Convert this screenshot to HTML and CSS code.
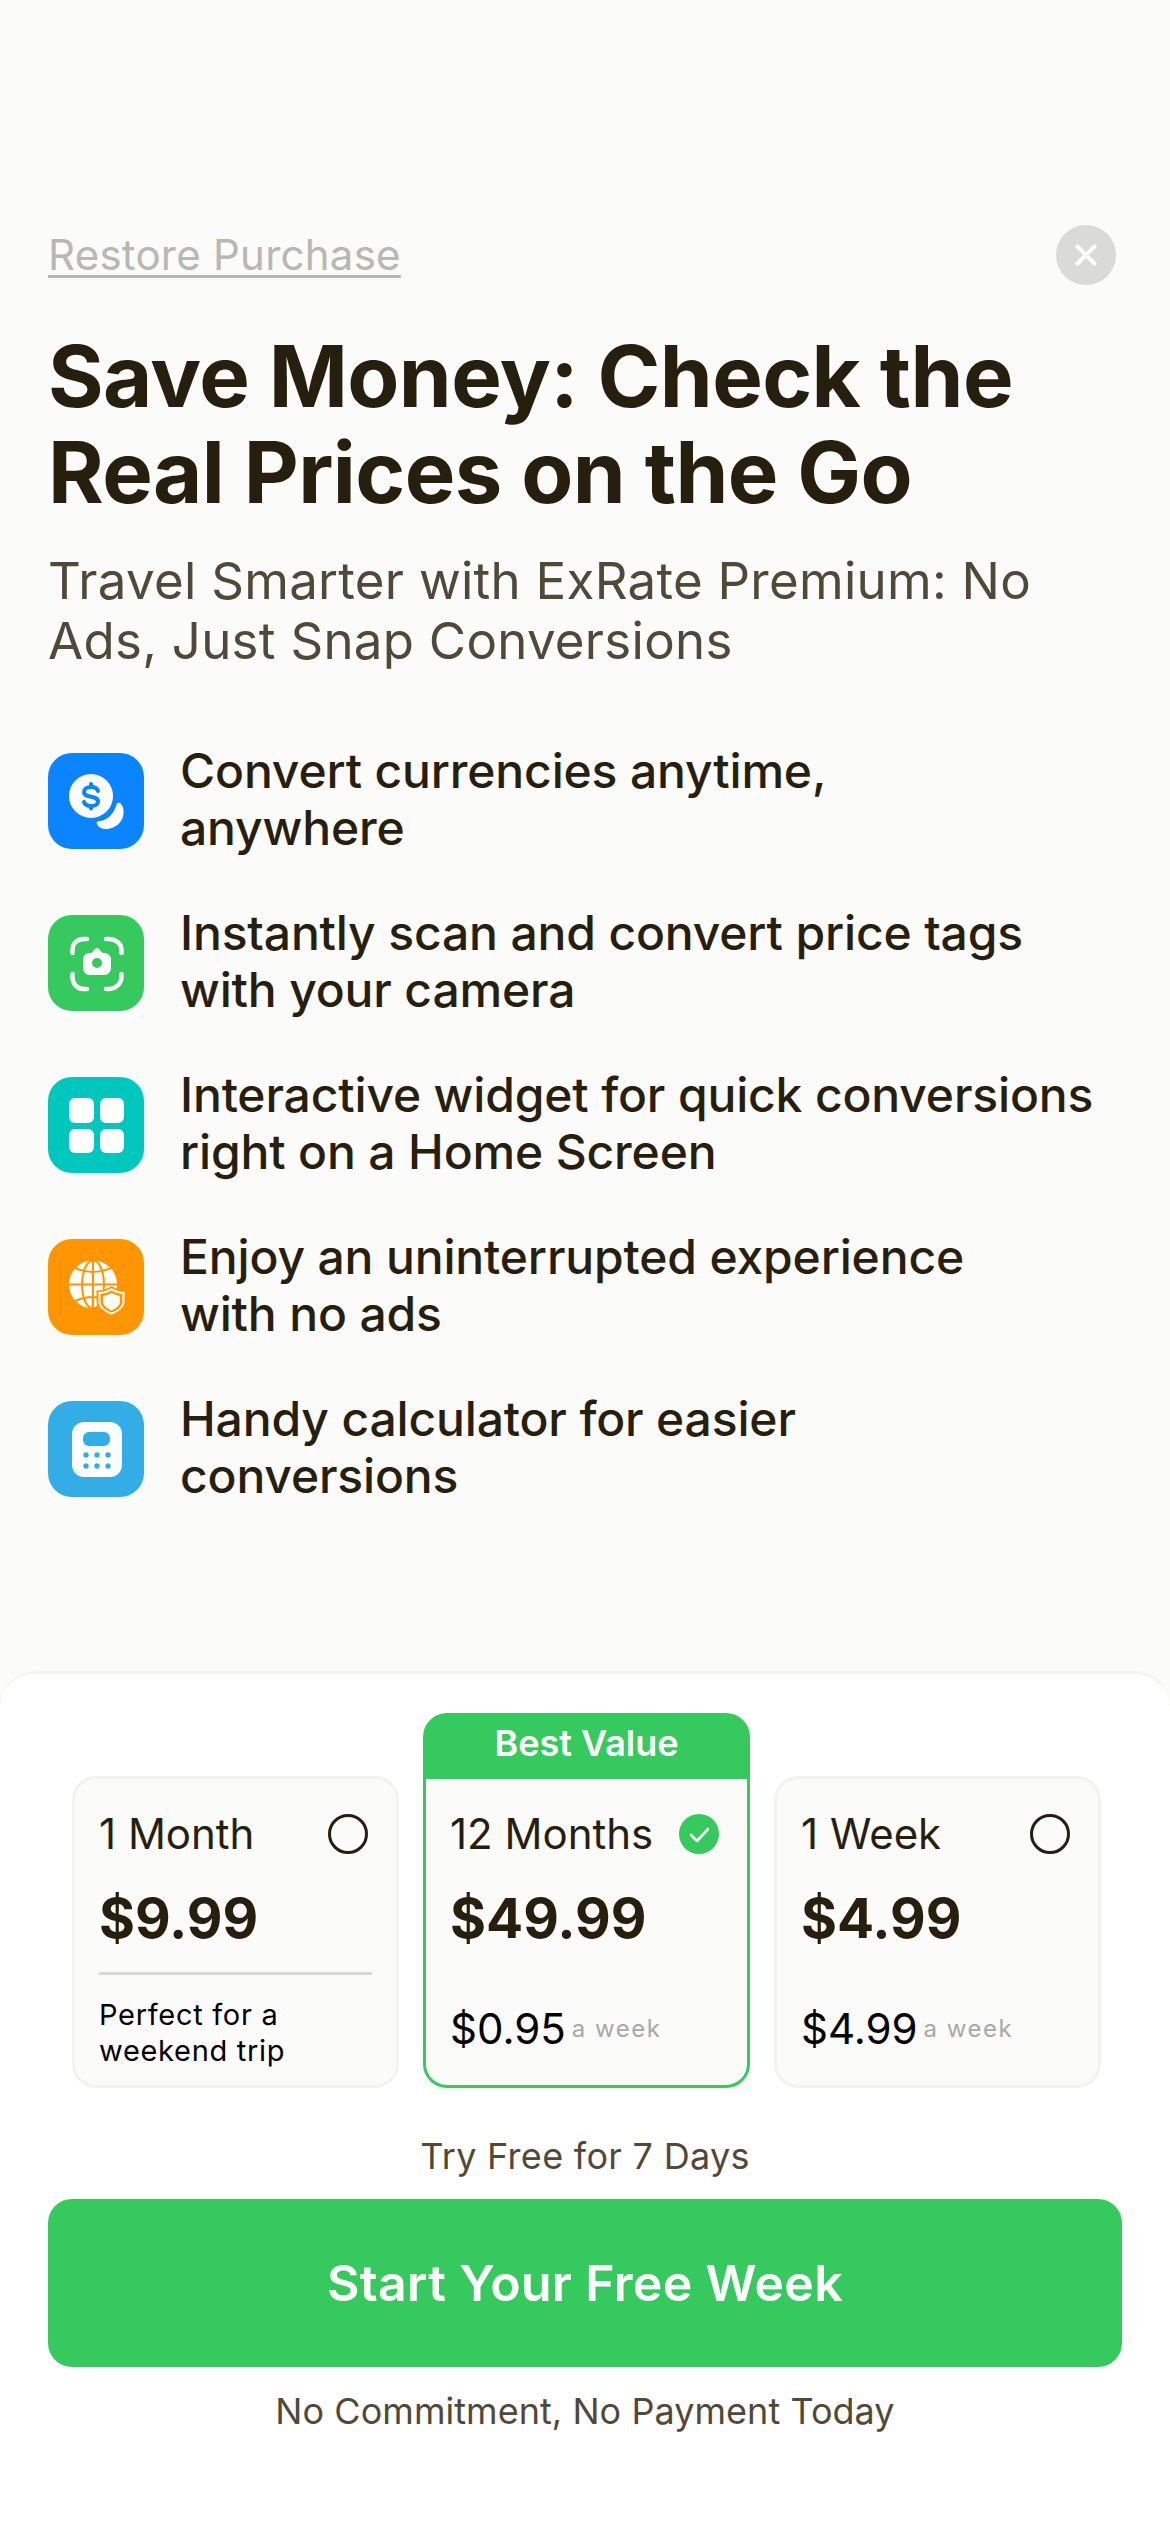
FILE: index.html
```html
<!DOCTYPE html>
<html lang="en">
<head>
<meta charset="utf-8">
<title>ExRate Premium</title>
<link rel="stylesheet" href="styles.css">
</head>
<body>
<main class="screen">
  <section class="top">
    <div class="topbar">
      <a class="restore">Restore Purchase</a>
      <span class="close"><svg width="30" height="30" viewBox="0 0 30 30"><path d="M6.500 6.500L23.500 23.500M23.500 6.500L6.500 23.500" stroke="#fff" stroke-width="4" stroke-linecap="round"/></svg></span>
    </div>
    <h1 class="title">Save Money: Check the<br>Real Prices on the Go</h1>
    <p class="subtitle">Travel Smarter with ExRate Premium: No<br>Ads, Just Snap Conversions</p>
    <ul class="features">
      <li class="feature">
        <span class="ficon blue"><svg width="96" height="96" viewBox="0 0 96 96"><circle cx="43" cy="43" r="22" fill="#fff"/><path d="M50 38c-1-3-4-4-7-4-4 0-7 2-7 5 0 7 14 2.500 14 9.500 0 3-3 4.500-7 4.500-3 0-6-1-7-4M43 31v3M43 53v2.500" fill="none" stroke="#0a84ff" stroke-width="4" stroke-linecap="round"/><path d="M69 50c3-1 5 1 6 5 3 11-6 21-17 21-4 0-8-2-9-5-1-2 0-3 3-3 8-1 14-7 17-18z" fill="#fff"/></svg></span>
        <span class="ftext">Convert currencies anytime,<br>anywhere</span>
      </li>
      <li class="feature">
        <span class="ficon green"><svg width="96" height="96" viewBox="0 0 96 96"><path d="M24.500 38v-3c0-6 4-11 11-11h3.500M58 24h3c7 0 12.500 5 12.500 11v3M24.500 59v3c0 6 4 12 11 12h3.500M58 74h3c7 0 12.500-6 12.500-12v-3" fill="none" stroke="#fff" stroke-width="4.400" stroke-linecap="round"/><path d="M42 38c2 0 3-1 4-3 1-1 2-2 3-2s2 1 3 2c1 2 2 3 4 3 4 0 7 3 7 6v9c0 4-3 7-7 7H42c-4 0-7-3-7-7v-9c0-3 3-6 7-6z" fill="#fff"/><circle cx="49" cy="48" r="5" fill="#36c95d"/></svg></span>
        <span class="ftext">Instantly scan and convert price tags<br>with your camera</span>
      </li>
      <li class="feature">
        <span class="ficon teal"><svg width="96" height="96" viewBox="0 0 96 96"><rect x="21" y="21" width="25" height="25" rx="6" fill="#fff"/><rect x="52" y="21" width="24" height="25" rx="6" fill="#fff"/><rect x="21" y="52" width="25" height="24" rx="6" fill="#fff"/><rect x="52" y="52" width="24" height="24" rx="6" fill="#fff"/></svg></span>
        <span class="ftext">Interactive widget for quick conversions<br>right on a Home Screen</span>
      </li>
      <li class="feature">
        <span class="ficon orange"><svg width="96" height="96" viewBox="0 0 96 96"><circle cx="45" cy="45.500" r="24" fill="#fff"/><g fill="none" stroke="#ff9500" stroke-width="2"><ellipse cx="45" cy="45.500" rx="11" ry="24"/><path d="M45 21v49M21 45.500h48M27 29Q45 37 63 29M27 62Q45 54 63 62"/></g><path d="M63.500 47q7 4.500 15 4.500v11c0 7-7 12-15 15-8-3-15-8-15-15v-11q8 0 15-4.500z" fill="#ff9500"/><path d="M63.500 49q6 4 13 4v9.500c0 6-6 10.500-13 13-7-2.500-13-7-13-13V53q7 0 13-4z" fill="#fff"/><path d="M63.500 51.500q5 3 11 3.500v7.500c0 5-5 9-11 11-6-2-11-6-11-11V55q6-.5 11-3.500z" fill="#ff9500"/><path d="M63.500 54q4 2.500 8.500 3v5.500c0 4-4 7-8.500 9-4.500-2-8.500-5-8.500-9V57q4.500-.5 8.500-3z" fill="#fff"/></svg></span>
        <span class="ftext">Enjoy an uninterrupted experience<br>with no ads</span>
      </li>
      <li class="feature">
        <span class="ficon sky"><svg width="96" height="96" viewBox="0 0 96 96"><rect x="24" y="21" width="50" height="55" rx="12" fill="#fff"/><rect x="35" y="31" width="27" height="14" rx="6" fill="#32ade6"/><g fill="#32ade6"><circle cx="38" cy="54" r="2.700"/><circle cx="49" cy="54" r="2.700"/><circle cx="60" cy="54" r="2.700"/><circle cx="38" cy="65" r="2.700"/><circle cx="49" cy="65" r="2.700"/><circle cx="60" cy="65" r="2.700"/></g></svg></span>
        <span class="ftext">Handy calculator for easier<br>conversions</span>
      </li>
    </ul>
  </section>
  <section class="sheet">
    <div class="plans">
      <div class="plan">
        <div class="plan-head"><span class="plan-name">1 Month</span><span class="radio"></span></div>
        <div class="plan-price">$9.99</div>
        <div class="plan-foot note">Perfect for a<br>weekend trip</div>
      </div>
      <div class="plan selected">
        <div class="badge">Best Value</div>
        <div class="plan-head"><span class="plan-name">12 Months</span><span class="check"><svg width="40" height="40" viewBox="0 0 40 40"><circle cx="20" cy="20" r="20" fill="#36c95d"/><path d="M12 21l6 6 11-12" fill="none" stroke="#fff" stroke-width="2.600" stroke-linecap="round" stroke-linejoin="round"/></svg></span></div>
        <div class="plan-price">$49.99</div>
        <div class="plan-foot rate"><span class="rate-value">$0.95</span><span class="rate-unit">a week</span></div>
      </div>
      <div class="plan">
        <div class="plan-head"><span class="plan-name">1 Week</span><span class="radio"></span></div>
        <div class="plan-price">$4.99</div>
        <div class="plan-foot rate"><span class="rate-value">$4.99</span><span class="rate-unit">a week</span></div>
      </div>
    </div>
    <p class="trial">Try Free for 7 Days</p>
    <button class="cta">Start Your Free Week</button>
    <p class="fine">No Commitment, No Payment Today</p>
  </section>
</main>
</body>
</html>
```
FILE: styles.css
```css
* { box-sizing: border-box; }
html, body { margin: 0; padding: 0; }
body { font-family: Inter, "Liberation Sans", sans-serif; background: #fbfbf9; color: #271f0e; }
.screen { width: 1170px; height: 2532px; display: flex; flex-direction: column; overflow: hidden; }
.top { flex: 1; padding: 225px 48px 0; }
.topbar { display: flex; justify-content: space-between; align-items: center; height: 60px; padding-right: 6px; }
.restore { font-size: 42px; line-height: 60px; color: #b8b7b0; text-decoration: underline; text-decoration-thickness: 3px; text-underline-offset: 5px; letter-spacing: 0.25px; }
.close { width: 60px; height: 60px; border-radius: 50%; background: #dadad7; display: flex; align-items: center; justify-content: center; }
.title { margin: 44px 0 0; font-size: 85px; line-height: 96px; font-weight: 700; letter-spacing: -0.6px; }
.subtitle { margin: 30px 0 0; font-size: 51px; line-height: 60px; color: #4f4938; letter-spacing: 0.28px; }
.features { list-style: none; margin: 73px 0 0; padding: 0; display: flex; flex-direction: column; gap: 48px; }
.feature { display: flex; align-items: center; gap: 36px; height: 114px; }
.ficon { width: 96px; height: 96px; border-radius: 24px; flex: none; display: block; }
.ficon svg { display: block; }
.blue { background: #0a84ff; }
.green { background: #36c95d; }
.teal { background: #00c7be; }
.orange { background: #ff9500; }
.sky { background: #32ade6; }
.ftext { font-size: 48px; line-height: 57px; font-weight: 500; letter-spacing: -0.15px; white-space: nowrap; padding-bottom: 4px; }
.sheet { height: 861px; flex: none; background: #fff; border-top: 3px solid #f3f3f2; border-radius: 36px 36px 0 0; padding: 40px 48px 0; display: flex; flex-direction: column; align-items: stretch; }
.plans { display: flex; gap: 24px; height: 374px; flex: none; align-items: flex-end; padding: 0 21px 0 24px; }
.plan { position: relative; flex: 1; height: 312px; border: 3px solid #f3f3f2; border-radius: 24px; background: #fbfbf9; padding: 32px 24px 0; display: flex; flex-direction: column; }
.selected { border-color: #36c95d; border-radius: 0 0 24px 24px; }
.badge { position: absolute; left: -3px; right: -3px; top: -66px; height: 66px; background: #36c95d; color: #fff; border-radius: 24px 24px 0 0; text-align: center; font-size: 36px; line-height: 60px; font-weight: 600; }
.plan-head { display: flex; justify-content: space-between; align-items: center; height: 46px; }
.plan-name { font-size: 42px; line-height: 46px; }
.radio { width: 40px; height: 40px; border: 3px solid #271f0e; border-radius: 50%; margin-right: 4px; }
.check { width: 40px; height: 40px; margin-right: 4px; }
.check svg { display: block; }
.plan-price { margin-top: 26px; font-size: 55px; line-height: 70px; font-weight: 700; }
.plan-foot { margin-top: auto; }
.note { border-top: 3px solid #d8d8d6; margin-top: 19px; padding-top: 22px; font-size: 29px; line-height: 36px; color: #000; letter-spacing: 0.7px; }
.rate { display: flex; align-items: center; gap: 6px; padding-bottom: 31px; }
.rate-value { font-size: 42px; line-height: 50px; color: #000; }
.rate-unit { font-size: 24px; line-height: 50px; color: #a9a8a2; letter-spacing: 1.5px; }
.trial { margin: 47px 0 0; text-align: center; font-size: 36px; line-height: 42px; color: #4f4938; letter-spacing: 0.3px; }
.cta { margin-top: 22px; height: 168px; width: 100%; flex: none; border: 0; border-radius: 24px; background: #36c95d; color: #fff; font-family: inherit; font-size: 50px; letter-spacing: 0.35px; font-weight: 600; }
.fine { margin: 23px 0 0; text-align: center; font-size: 36px; line-height: 42px; color: #4f4938; letter-spacing: 0.05px; }
```
